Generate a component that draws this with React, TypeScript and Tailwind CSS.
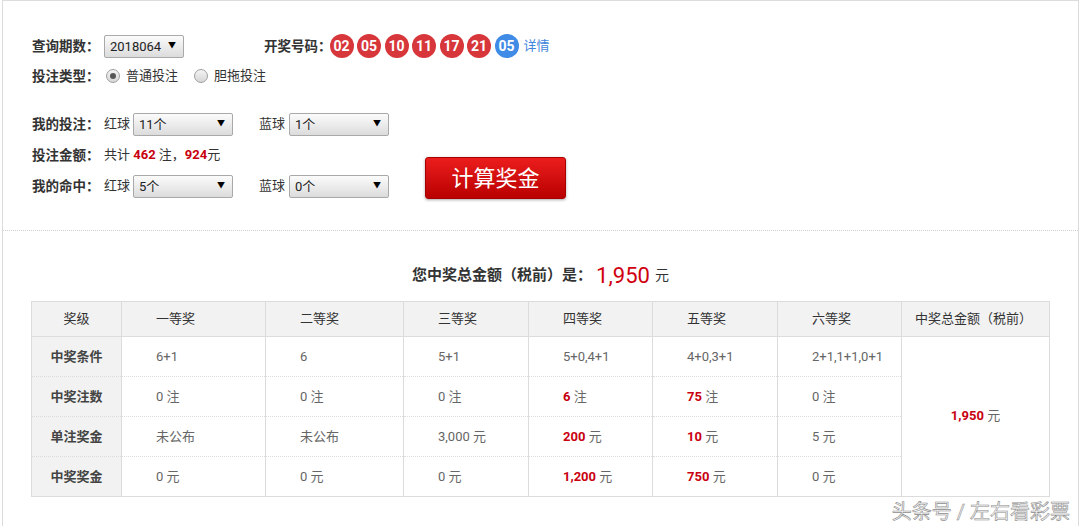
const red = "text-[#c9000f]";

function Select({ value, w }: { value: string; w: string }) {
  return (
    <div
      className={`${w} flex h-[23px] items-center justify-between rounded-[2px] border border-[#a9a9a9] bg-gradient-to-b from-[#fbfbfb] to-[#dcdcdc] pl-[5px] pr-[7px] text-[13px] text-[#222]`}
    >
      <span className="pt-[2px]">{value}</span>
      <span className="text-[8px] text-black">▼</span>
    </div>
  );
}

function Radio({ checked }: { checked?: boolean }) {
  return (
    <span className="flex h-[14px] w-[14px] items-center justify-center rounded-full border border-[#a0a0a0] bg-gradient-to-b from-[#f4f4f4] to-[#d6d6d6]">
      {checked && <span className="h-[6px] w-[6px] rounded-full bg-[#555]" />}
    </span>
  );
}

function Ball({ n, blue }: { n: string; blue?: boolean }) {
  return (
    <span
      className={`flex h-[24px] w-[24px] items-center justify-center rounded-full text-[14px] font-bold text-white ${
        blue ? "bg-[#3f8be6]" : "bg-[#d7363b]"
      }`}
    >
      {n}
    </span>
  );
}

function Label({ children }: { children: React.ReactNode }) {
  return <span className="w-[72px] text-[13.5px] font-bold text-[#333]">{children}</span>;
}

const levels = ["一等奖", "二等奖", "三等奖", "四等奖", "五等奖", "六等奖"];

type Cell = { v: string; unit?: string; hot?: boolean };

const rows: { name: string; cells: Cell[] }[] = [
  {
    name: "中奖条件",
    cells: [{ v: "6+1" }, { v: "6" }, { v: "5+1" }, { v: "5+0,4+1" }, { v: "4+0,3+1" }, { v: "2+1,1+1,0+1" }],
  },
  {
    name: "中奖注数",
    cells: [
      { v: "0", unit: "注" },
      { v: "0", unit: "注" },
      { v: "0", unit: "注" },
      { v: "6", unit: "注", hot: true },
      { v: "75", unit: "注", hot: true },
      { v: "0", unit: "注" },
    ],
  },
  {
    name: "单注奖金",
    cells: [
      { v: "未公布" },
      { v: "未公布" },
      { v: "3,000", unit: "元" },
      { v: "200", unit: "元", hot: true },
      { v: "10", unit: "元", hot: true },
      { v: "5", unit: "元" },
    ],
  },
  {
    name: "中奖奖金",
    cells: [
      { v: "0", unit: "元" },
      { v: "0", unit: "元" },
      { v: "0", unit: "元" },
      { v: "1,200", unit: "元", hot: true },
      { v: "750", unit: "元", hot: true },
      { v: "0", unit: "元" },
    ],
  },
];

export default function App() {
  return (
    <div className="relative h-[526px] w-[1080px] overflow-hidden bg-white font-['Roboto','Noto_Sans_CJK_SC',sans-serif] text-[#333]">
      <div className="ml-[2px] h-full w-[1077px] border-x border-t border-[#dcdcdc]">
        {/* query form */}
        <section className="flex flex-col pb-[32px] pl-[29px] pt-[33px]">
          <div className="flex h-[24px] items-center">
            <Label>查询期数：</Label>
            <Select value="2018064" w="w-[80px]" />
            <span className="ml-[80px] text-[13.5px] font-bold text-[#333]">开奖号码：</span>
            <div className="-ml-[2px] flex gap-[3.5px]">
              {["02", "05", "10", "11", "17", "21"].map((n) => (
                <Ball key={n} n={n} />
              ))}
              <Ball n="05" blue />
            </div>
            <span className="ml-[5px] text-[13px] text-[#3f86dc]">详情</span>
          </div>

          <div className="mt-[6px] flex h-[24px] items-center text-[13px] text-[#333]">
            <Label>投注类型：</Label>
            <span className="ml-[2px]">
              <Radio checked />
            </span>
            <span className="ml-[6px]">普通投注</span>
            <span className="ml-[16px]">
              <Radio />
            </span>
            <span className="ml-[6px]">胆拖投注</span>
          </div>

          <div className="mt-[24px] flex items-end gap-[36px]">
            <div className="flex flex-col">
              <div className="flex h-[24px] items-center text-[13px]">
                <Label>我的投注：</Label>
                <span className="w-[29px]">红球</span>
                <Select value="11个" w="w-[100px]" />
                <span className="ml-[26px] w-[30px]">蓝球</span>
                <Select value="1个" w="w-[100px]" />
              </div>
              <div className="mt-[7px] flex h-[24px] items-center text-[13px]">
                <Label>投注金额：</Label>
                <span>
                  共计 <b className={red}>462</b> 注，<b className={red}>924</b>元
                </span>
              </div>
              <div className="mt-[7px] flex h-[24px] items-center text-[13px]">
                <Label>我的命中：</Label>
                <span className="w-[29px]">红球</span>
                <Select value="5个" w="w-[100px]" />
                <span className="ml-[26px] w-[30px]">蓝球</span>
                <Select value="0个" w="w-[100px]" />
              </div>
            </div>
            <button className="mb-[-1px] flex h-[42px] w-[141px] items-center justify-center rounded-[3px] border border-[#a80000] bg-gradient-to-b from-[#ec1c1c] to-[#b90000] text-[22px] text-white shadow-[0_1px_3px_rgba(0,0,0,0.35)]">
              计算奖金
            </button>
          </div>
        </section>

        <div className="border-t border-dotted border-[#cfcfcf]" />

        {/* result */}
        <div className="mt-[29px] flex h-[30px] items-center justify-center">
          <span className="text-[15px] font-bold text-[#333]">您中奖总金额（税前）是：</span>
          <span className="ml-[4px] text-[22px] text-[#d0000f]">1,950</span>
          <span className="ml-[5px] text-[14px] text-[#333]">元</span>
        </div>

        <table className="ml-[28px] mt-[11px] w-[1018px] table-fixed border-collapse border border-[#dcdcdc] text-[13px]">
          <colgroup>
            <col className="w-[90px]" />
            <col className="w-[144px]" />
            <col className="w-[138px]" />
            <col className="w-[125px]" />
            <col className="w-[124px]" />
            <col className="w-[125px]" />
            <col className="w-[124px]" />
            <col className="w-[148px]" />
          </colgroup>
          <thead>
            <tr className="h-[35px] border-b border-[#dcdcdc] bg-[#f2f2f2] text-[#333]">
              <th className="border-r border-[#dcdcdc] text-center font-normal">奖级</th>
              {levels.map((l) => (
                <th key={l} className="border-r border-[#dcdcdc] pl-[34px] text-left font-normal">
                  {l}
                </th>
              ))}
              <th className="pl-[13px] text-left font-normal">中奖总金额（税前）</th>
            </tr>
          </thead>
          <tbody>
            {rows.map((r, i) => (
              <tr key={r.name} className="h-[40px] border-b border-dotted border-[#dcdcdc]">
                <td className="border-r border-[#dcdcdc] bg-[#f2f2f2] text-center font-bold text-[#444]">
                  {r.name}
                </td>
                {r.cells.map((c, j) => (
                  <td key={j} className="border-r border-[#dcdcdc] pl-[34px] text-[#666]">
                    <span className={c.hot ? `font-bold ${red}` : ""}>{c.v}</span>
                    {c.unit && <span> {c.unit}</span>}
                  </td>
                ))}
                {i === 0 && (
                  <td rowSpan={4} className="border-b border-solid border-[#dcdcdc] pb-[2px] text-center">
                    <b className={red}>1,950</b> <span className="text-[#666]">元</span>
                  </td>
                )}
              </tr>
            ))}
          </tbody>
        </table>
      </div>

      <span className="absolute right-[10px] top-[497px] text-[20px] text-[#f6f6f6] [-webkit-text-stroke:0.6px_#8c8c8c]">
        头条号 / 左右看彩票
      </span>
    </div>
  );
}
